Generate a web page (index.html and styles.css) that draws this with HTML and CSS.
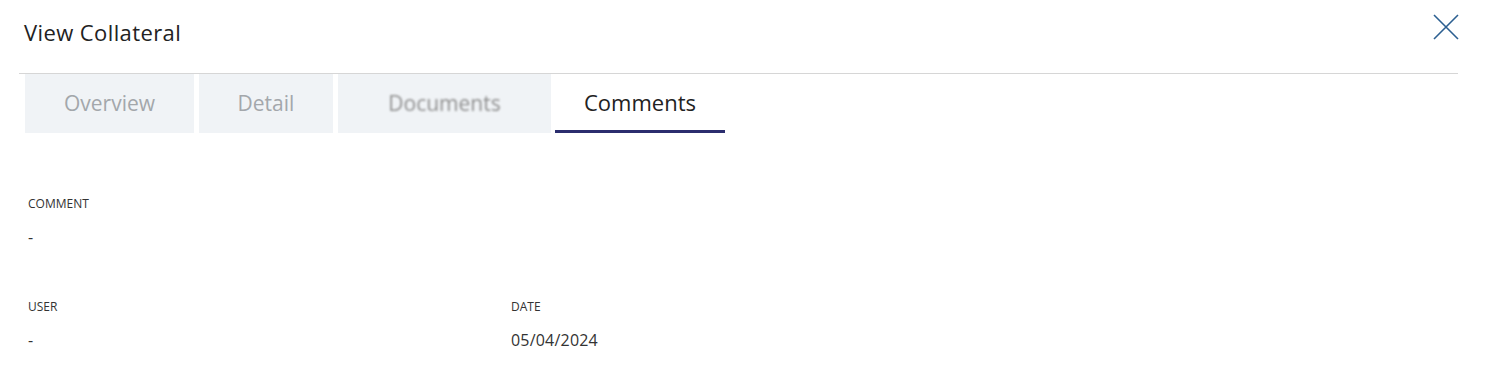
FILE: index.html
```html
<!DOCTYPE html>
<html lang='en'>
<head>
    <meta charset='UTF-8'>
    <title>View Collateral</title>
    <link rel="stylesheet" href="styles.css">
</head>
<body>
    <div class='panel'>
        <div class='panel-header'>
            <h2 class='panel-title'>View Collateral</h2>
            <button class='close-button' aria-label='Close'>
                <svg width='26' height='26' viewBox='0 0 26 26'>
                    <path d='M1 1 L25 25 M25 1 L1 25' stroke='#2c5f91' stroke-width='1.6' fill='none'/>
                </svg>
            </button>
        </div>

        <div class='tabs'>
            <div class='tab tab-overview'>Overview</div>
            <div class='tab tab-detail'>Detail</div>
            <div class='tab tab-documents'><span>Documents</span></div>
            <div class='tab tab-comments active'>Comments</div>
        </div>

        <div class='content'>
            <div class='field'>
                <div class='field-label'>COMMENT</div>
                <div class='field-value'>-</div>
            </div>
            <div class='field-row'>
                <div class='field'>
                    <div class='field-label'>USER</div>
                    <div class='field-value'>-</div>
                </div>
                <div class='field'>
                    <div class='field-label'>DATE</div>
                    <div class='field-value'>05/04/2024</div>
                </div>
            </div>
        </div>
    </div>
</body>
</html>
```

FILE: styles.css
```css
* {
    box-sizing: border-box;
    margin: 0;
    padding: 0;
}

body {
    background-color: #ffffff;
    font-family: 'Open Sans', 'Lato', sans-serif;
    color: #222222;
}

.panel {
    padding: 0 35px 0 19px;
}

.panel-header {
    display: flex;
    justify-content: space-between;
    align-items: center;
    height: 74px;
    padding: 0 0 10px 5px;
    border-bottom: 1px solid #d6d6d6;
}

.panel-title {
    font-size: 22px;
    font-weight: 400;
    color: #222222;
    letter-spacing: 0.4px;
}

.close-button {
    background: none;
    border: none;
    cursor: pointer;
    margin-right: -1px;
    margin-top: -10px;
    display: flex;
}

.tabs {
    display: flex;
    gap: 5px;
    padding-left: 6px;
}

.tab {
    height: 59px;
    display: flex;
    align-items: center;
    justify-content: center;
    font-size: 21px;
    color: #a3a7ab;
    background-color: #f0f3f6;
    padding-bottom: 2px;
}

.tab-overview {
    width: 169px;
}

.tab-detail {
    width: 134px;
}

.tab-documents {
    width: 213px;
    color: #8e8e8e;
}

.tab-documents span {
    filter: blur(0.9px);
}

.tab-comments {
    width: 170px;
    margin-left: -1px;
}

.tab.active {
    background-color: transparent;
    color: #222222;
    font-size: 22px;
    border-bottom: 3px solid #2b2d6e;
    padding-bottom: 0;
}

.content {
    padding: 63px 0 0 9px;
}

.field-label {
    font-size: 12px;
    line-height: 16px;
    color: #333333;
    margin-bottom: 14px;
}

.field-value {
    font-size: 16px;
    line-height: 22px;
    color: #333333;
    letter-spacing: 0.2px;
}

.content > .field {
    margin-bottom: 51px;
}

.field-row {
    display: flex;
}

.field-row .field {
    width: 483px;
}
```
